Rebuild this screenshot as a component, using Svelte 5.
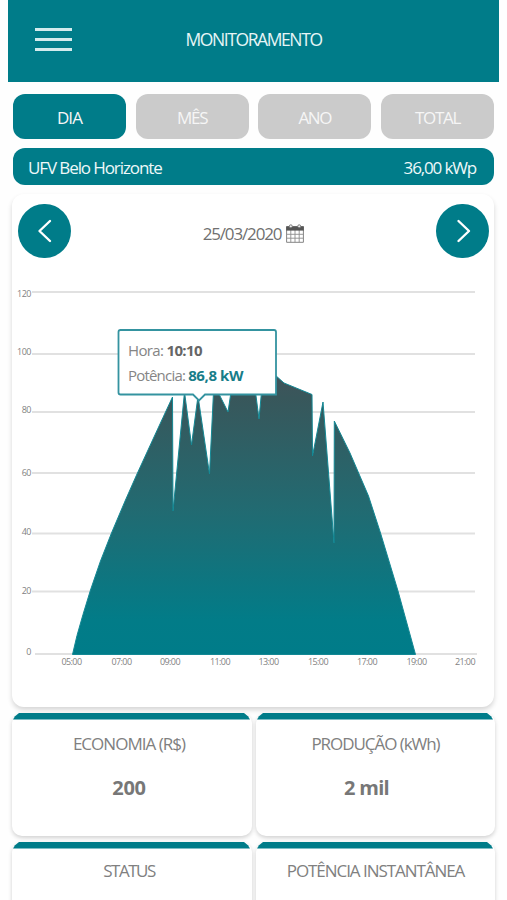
<script lang="ts">
  type Tick = { label: string; y: number; textY: number };

  const tabs = ['DIA', 'MÊS', 'ANO', 'TOTAL'];
  let active = $state('DIA');

  const yTicks: Tick[] = [
    { label: '120', y: 22, textY: 27 },
    { label: '100', y: 84, textY: 85 },
    { label: '80', y: 142, textY: 142.5 },
    { label: '60', y: 203, textY: 206 },
    { label: '40', y: 263.5, textY: 264.5 },
    { label: '20', y: 321.5, textY: 323.5 },
    { label: '0', y: 384, textY: 384.5 },
  ];

  const xTicks = [
    { label: '05:00', x: 59.5 },
    { label: '07:00', x: 109.5 },
    { label: '09:00', x: 158 },
    { label: '11:00', x: 208 },
    { label: '13:00', x: 256.5 },
    { label: '15:00', x: 306 },
    { label: '17:00', x: 355 },
    { label: '19:00', x: 404.5 },
    { label: '21:00', x: 453 },
  ];

  // generated power over the day
  const points = [
    [60.5, 384.5], [65, 365.5], [71, 344.5], [78.5, 320], [88.5, 291], [99.5, 263], [113.5, 230],
    [125, 204], [142, 167], [151, 147.5], [160.5, 127], [161, 241], [172.5, 122], [179.5, 175],
    [186, 126], [197.5, 204], [201.5, 122], [206, 122], [216, 142], [219, 122], [243.5, 122],
    [247, 149], [249.5, 122], [250, 100], [262, 104], [272, 113], [300, 124.5], [300.5, 186],
    [311, 132], [322, 273], [322.3, 151], [338, 183], [356.5, 226], [368.5, 263], [386, 321],
    [403.5, 384.5],
  ];
  const area = points.map(p => p.join(',')).join(' ');

  const stats = [
    { title: 'ECONOMIA (R$)', value: '200', kind: 'savings' },
    { title: 'PRODUÇÃO (kWh)', value: '2 mil', kind: 'production' },
    { title: 'STATUS', value: '', kind: 'status' },
    { title: 'POTÊNCIA INSTANTÂNEA', value: '', kind: 'power' },
  ];
</script>

<div class="screen">
  <header>
    <button class="menu" aria-label="Menu">
      <span></span>
      <span></span>
      <span></span>
    </button>
    <h1>MONITORAMENTO</h1>
  </header>

  <nav class="tabs">
    {#each tabs as tab}
      <button class="tab" class:active={active === tab} onclick={() => (active = tab)}>{tab}</button>
    {/each}
  </nav>

  <div class="plant">
    <span class="name">UFV Belo Horizonte</span>
    <span class="peak">36,00 kWp</span>
  </div>

  <section class="chart-card">
    <div class="date-row">
      <button class="arrow" aria-label="Dia anterior">
        <svg width="52" height="54" viewBox="0 0 52 54"><path d="M32 17 21.5 27 32 37" /></svg>
      </button>
      <div class="date">
        <span>25/03/2020</span>
        <svg class="calendar" width="18" height="19" viewBox="0 0 18 19">
          <path class="frame" d="M.6 3H17.4V18.3H.6Z" />
          <path class="grid" d="M.6 10.3H17.4M.6 14.2H17.4M4.8 6V18.3M9 6V18.3M13.2 6V18.3" />
          <path class="head" d="M.2 2.2H17.8V6.6H.2Z" />
          <circle cx="4.8" cy="2.3" r="1.5" />
          <circle cx="13.2" cy="2.3" r="1.5" />
        </svg>
      </div>
      <button class="arrow" aria-label="Próximo dia">
        <svg width="52" height="54" viewBox="0 0 52 54"><path d="M22.5 17 33 27 22.5 37" /></svg>
      </button>
    </div>

    <svg class="chart" width="482" height="437" viewBox="0 0 482 437">
      <defs>
        <linearGradient id="power" gradientUnits="userSpaceOnUse" x1="0" y1="100" x2="0" y2="384">
          <stop offset="0" stop-color="#41525a" />
          <stop offset="0.1" stop-color="#38575b" />
          <stop offset="0.5" stop-color="#216b72" />
          <stop offset="0.88" stop-color="#027c88" />
          <stop offset="1" stop-color="#007c89" />
        </linearGradient>
      </defs>

      {#each yTicks as tick}
        <line class="rule" x1={tick.label === '0' ? 23 : 20} x2={tick.label === '0' ? 465 : 463} y1={tick.y} y2={tick.y} />
        <text class="tick" x="19" y={tick.textY} text-anchor="end">{tick.label}</text>
      {/each}

      <polygon class="area" points={area} fill="url(#power)" />

      {#each xTicks as tick}
        <text class="tick hour" x={tick.x} y="395" text-anchor="middle">{tick.label}</text>
      {/each}

      <path class="tip" d="M108.5 60H262a2 2 0 0 1 2 2V124.5H193L187 130.5 181 124.5H108.5a2 2 0 0 1 -2 -2V62a2 2 0 0 1 2 -2Z" />
      <text class="tip-text hora" x="116" y="86">Hora: <tspan>10:10</tspan></text>
      <text class="tip-text pow" x="116" y="110.5">Potência: <tspan>86,8 kW</tspan></text>
    </svg>
  </section>

  <div class="stats">
    {#each stats as stat}
      <article class="card {stat.kind}">
        <div class="bar"></div>
        <h2>{stat.title}</h2>
        <strong>{stat.value}</strong>
      </article>
    {/each}
  </div>
</div>

<style>
  :global(body) {
    background: #fefefe;
    overflow: hidden;
  }

  .screen {
    width: 507px;
    height: 900px;
    overflow: hidden;
    font-family: "Open Sans", "Noto Sans", sans-serif;
    color: #777;
  }

  button {
    border: 0;
    padding: 0;
    font: inherit;
    color: #fff;
  }

  header {
    display: grid;
    grid-template-columns: 80px 1fr 80px;
    height: 81.5px;
    margin: 0 8px;
    background: #007c89;
  }

  .menu {
    display: flex;
    flex-direction: column;
    gap: 7px;
    width: 37px;
    margin: 28px 0 0 26.5px;
    background: none;
  }

  .menu span {
    height: 3px;
    background: #d3ebed;
  }

  h1 {
    margin: 27px 0 0;
    font-size: 17.5px;
    line-height: 24px;
    font-weight: 400;
    letter-spacing: -1.4px;
    text-align: center;
    color: #e6f5f6;
  }

  .tabs {
    display: grid;
    grid-template-columns: repeat(4, 113px);
    justify-content: space-between;
    height: 44.5px;
    margin: 12.5px 13px 0;
  }

  .tab {
    border-radius: 12px;
    background: #cbcbcb;
    font-size: 17px;
    letter-spacing: -1.3px;
    padding-top: 2px;
    color: #f6f6f6;
  }

  .tab.active {
    background: #007c89;
    letter-spacing: -0.9px;
  }

  .plant {
    display: flex;
    justify-content: space-between;
    align-items: center;
    height: 37px;
    margin: 9.5px 13px 0;
    padding: 1px 18px 0 15px;
    box-sizing: border-box;
    border-radius: 12px;
    background: #007c89;
    color: #eef8f9;
    font-size: 17px;
  }

  .name { letter-spacing: -1.1px; }
  .peak { letter-spacing: -1.15px; }

  .chart-card {
    height: 513px;
    margin: 9px 13px 0 12px;
    border-radius: 12px;
    background: #fff;
    box-shadow: 0 3px 5px rgba(0, 0, 0, 0.16);
  }

  .date-row {
    display: flex;
    justify-content: space-between;
    height: 76px;
    padding: 9.5px 5px 0 6px;
    box-sizing: border-box;
  }

  .arrow {
    width: 52.5px;
    height: 54.5px;
    border-radius: 50%;
    background: #007c89;
  }

  .arrow svg { display: block; }

  .arrow path {
    fill: none;
    stroke: #fff;
    stroke-width: 2.4;
    stroke-linecap: round;
    stroke-linejoin: round;
  }

  .date {
    display: flex;
    gap: 5px;
    margin-top: 18.5px;
    font-size: 17px;
    line-height: 24px;
    letter-spacing: -1.15px;
    color: #707070;
  }

  .calendar { margin-top: 2px; }
  .calendar .frame { fill: #fff; stroke: #858585; }
  .calendar .grid { stroke: #8d8d8d; stroke-width: 0.9; }
  .calendar .head { fill: #555; }
  .calendar circle { fill: #eee; stroke: #666; stroke-width: 0.8; }

  .chart { display: block; }

  .rule { stroke: #e1e1e1; stroke-width: 2; }

  .tick {
    font-size: 9px;
    letter-spacing: -0.5px;
    fill: #828282;
  }

  .hour { letter-spacing: -0.6px; }

  .area { stroke: #138894; stroke-width: 1; }

  .tip { fill: #fff; stroke: #3493a0; stroke-width: 1.8; }

  .tip-text { font-size: 15px; fill: #858585; }
  .tip-text tspan { font-weight: 700; }
  .hora { letter-spacing: -0.65px; }
  .hora tspan { fill: #666; }
  .pow { letter-spacing: -0.8px; }
  .pow tspan { fill: #177d89; letter-spacing: -0.4px; }

  .stats {
    display: grid;
    grid-template-columns: 240px 239px;
    gap: 6.5px 4px;
    margin: 6px 12px 0;
  }

  .card {
    height: 122.5px;
    border-radius: 10px;
    background: #fff;
    box-shadow: 0 2px 4px rgba(0, 0, 0, 0.18);
    text-align: center;
  }

  .bar {
    height: 6.5px;
    margin: 0 2px 0 1px;
    background: #007c89;
    clip-path: polygon(0 100%, 2px 50%, 6px 0, calc(100% - 6px) 0, calc(100% - 2px) 50%, 100% 100%);
  }

  h2 {
    margin: 12px 0 0;
    padding-right: 6px;
    font-size: 17px;
    line-height: 24px;
    font-weight: 400;
    letter-spacing: -0.97px;
    color: #808080;
  }

  strong {
    display: block;
    margin-top: 19px;
    padding-right: 6px;
    font-size: 20px;
    line-height: 26px;
    letter-spacing: -0.3px;
    color: #777;
  }

  .production h2 { padding-right: 0; letter-spacing: -1.05px; }
  .production strong { padding-right: 18px; letter-spacing: -0.7px; }
  .status h2 { margin-top: 10px; letter-spacing: -1.5px; }
  .power h2 { margin-top: 10px; padding-right: 0; letter-spacing: -1.05px; }
</style>
